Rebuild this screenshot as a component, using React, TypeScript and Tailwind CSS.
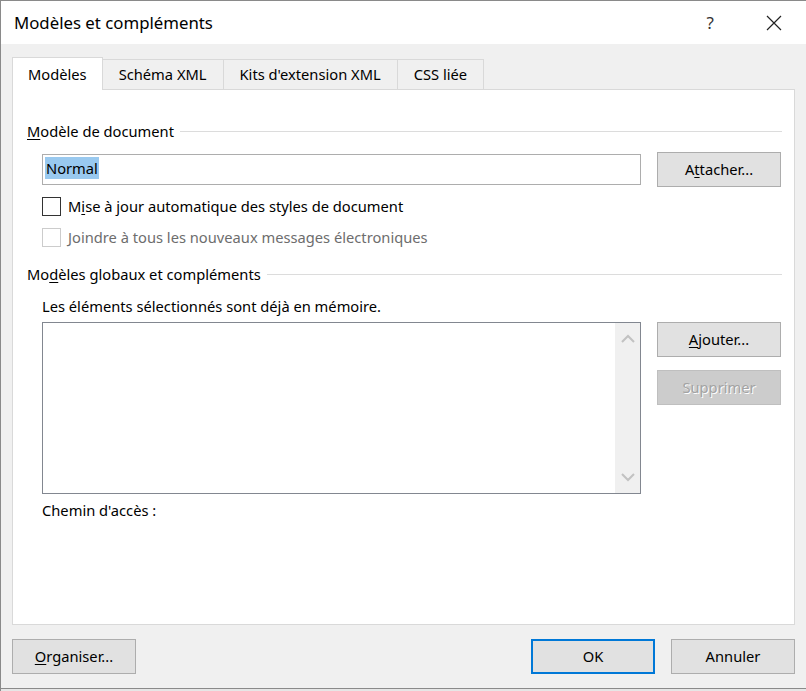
import React from "react"

const font = { fontFamily: '"Noto Sans", "Open Sans", sans-serif' }

function Btn({ children, disabled, primary, className = "" }: BtnProps) {
  let look = "bg-[#e1e1e1] border border-[#adadad] text-black"
  if (disabled) look = "bg-[#cccccc] border border-[#bfbfbf] text-[#a3a3a3] [text-shadow:1px_1px_0_#ffffff]"
  if (primary) look = "bg-[#e1e1e1] border-2 border-[#0078d7] text-black"
  return (
    <div className={`flex h-[35px] w-[124px] items-center justify-center text-[14.7px] ${look} ${className}`}>
      {children}
    </div>
  )
}

type BtnProps = {
  children: React.ReactNode
  disabled?: boolean
  primary?: boolean
  className?: string
}

function GroupLabel({ children }: { children: React.ReactNode }) {
  return (
    <div className="flex h-[20px] items-center gap-[6px] pr-[12px]">
      <span className="text-[14.7px] leading-[20px] text-black whitespace-nowrap">{children}</span>
      <div className="h-px flex-1 bg-[#dcdcdc]" />
    </div>
  )
}

function Tab({ label, active }: { label: string; active?: boolean }) {
  if (active) {
    return (
      <div className="relative z-10 -mb-px flex h-[33px] items-center border border-b-0 border-[#d9d9d9] bg-white px-[15px] text-[14.7px]">
        {label}
      </div>
    )
  }
  return (
    <div className="flex h-[30px] items-center border border-l-0 border-b-0 border-[#d9d9d9] bg-[#f0f0f0] px-[16px] text-[14.7px]">
      {label}
    </div>
  )
}

function Chevron({ up }: { up?: boolean }) {
  return (
    <svg width="14" height="9" viewBox="0 0 14 9">
      <path
        d={up ? "M1 8 L7 2 L13 8" : "M1 1 L7 7 L13 1"}
        fill="none"
        stroke="#c2c2c2"
        strokeWidth="2"
      />
    </svg>
  )
}

export default function App() {
  return (
    <div
      style={font}
      className="flex h-[691px] w-[806px] flex-col overflow-hidden border-t border-l border-[#8a8a8a] bg-[#f0f0f0] text-black"
    >
      <div className="flex h-[43px] shrink-0 items-center justify-between bg-white pl-[13px] pr-[24px]">
        <span className="text-[16.8px]">Modèles et compléments</span>
        <div className="flex items-center gap-[52px]">
          <span className="text-[17px] text-[#333]">?</span>
          <svg width="16" height="16" viewBox="0 0 16 16">
            <path d="M1 1 L15 15 M15 1 L1 15" stroke="#222" strokeWidth="1.2" />
          </svg>
        </div>
      </div>

      <div className="flex flex-1 flex-col px-[11px] pt-[13px]">
        <div className="flex items-end">
          <Tab label="Modèles" active />
          <Tab label="Schéma XML" />
          <Tab label="Kits d'extension XML" />
          <Tab label="CSS liée" />
        </div>

        <div className="flex h-[536px] flex-col border border-[#d9d9d9] bg-white pl-[14px] pt-[31px]">
          <GroupLabel>
            <u className="underline-offset-2">M</u>odèle de document
          </GroupLabel>

          <div className="mt-[11px] flex items-center gap-[16px] pl-[15px]">
            <div className="flex h-[31px] w-[599px] items-center border border-[#adadad] px-[2px] pb-[3px]">
              <span className="bg-[#99c9ef] px-px text-[14.7px] leading-[22px]">Normal</span>
            </div>
            <Btn>
              A<u className="underline-offset-2">t</u>tacher...
            </Btn>
          </div>

          <div className="mt-[9px] flex items-center gap-[7px] pl-[15px]">
            <div className="h-[19px] w-[19px] border border-[#333333]" />
            <span className="text-[14.7px] leading-[20px]">
              M<u className="underline-offset-2">i</u>se à jour automatique des styles de document
            </span>
          </div>
          <div className="mt-[11px] flex items-center gap-[7px] pl-[15px]">
            <div className="h-[19px] w-[19px] border border-[#cccccc]" />
            <span className="text-[14.7px] leading-[20px] text-[#6d6d6d]">
              Joindre à tous les nouveaux messages électroniques
            </span>
          </div>

          <div className="mt-[17px]">
            <GroupLabel>
              Mo<u className="underline-offset-2">d</u>èles globaux et compléments
            </GroupLabel>
          </div>

          <div className="mt-[12px] pl-[15px] text-[14.7px] leading-[20px]">
            Les éléments sélectionnés sont déjà en mémoire.
          </div>

          <div className="mt-[6px] flex gap-[16px] pl-[15px]">
            <div className="flex h-[172px] w-[599px] justify-end border border-[#828790]">
              <div className="flex w-[25px] flex-col items-center justify-between bg-[#f0f0f0] py-[11px]">
                <Chevron up />
                <Chevron />
              </div>
            </div>
            <div className="flex flex-col gap-[13px]">
              <Btn>
                <u className="underline-offset-2">A</u>jouter...
              </Btn>
              <Btn disabled>Supprimer</Btn>
            </div>
          </div>

          <div className="mt-[6px] pl-[15px] text-[14.7px] leading-[20px]">Chemin d'accès :</div>
        </div>

        <div className="mt-[14px] flex items-center">
          <Btn>
            <u className="underline-offset-2">O</u>rganiser...
          </Btn>
          <div className="flex-1" />
          <Btn primary>OK</Btn>
          <Btn className="ml-[16px]">Annuler</Btn>
        </div>
      </div>
      <div className="h-[3px] shrink-0 border-t border-[#8a8a8a] bg-[#e6e6e6]" />
    </div>
  )
}
